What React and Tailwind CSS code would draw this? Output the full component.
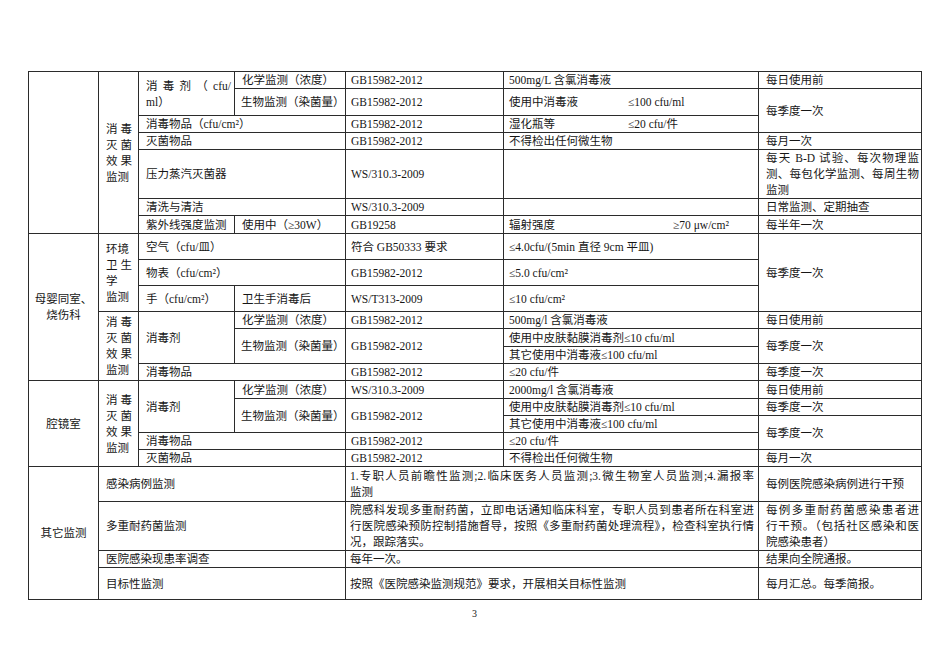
import React from 'react'

// ─── cell styles ─────────────────────────────────────────────────────────────
const B = 'border border-[#2b2b2b] align-middle p-0 leading-[16px]'
const T = `${B} text-left pl-[7px] pr-[3px] whitespace-nowrap`   // item / sub-item
const S = `${B} text-left pl-[5px] pr-[3px] whitespace-nowrap`   // standard / result
const F = `${B} text-left pl-[7px] pr-[2px] whitespace-nowrap`   // frequency
const V = `${B} text-left px-[7px]`                              // narrow vertical label
const D = `${B} text-center`                                     // department
const W = `${B} text-left px-[4px]`                              // wide merged text

// justified lines, last line left-aligned
function J({ lines }) {
  return lines.map((l, i) => (
    <div
      key={i}
      className={i < lines.length - 1 ? 'whitespace-nowrap text-justify [text-align-last:justify]' : 'whitespace-nowrap'}
    >
      {l}
    </div>
  ))
}

function Vert({ lines }) {
  return (
    <div className="w-[26px]">
      <J lines={lines} />
    </div>
  )
}

const GB = 'GB15982-2012'

function Pair({ a, b, w }) {
  return (
    <span className="flex">
      <span className={w}>{a}</span>
      <span>{b}</span>
    </span>
  )
}

export default function App() {
  return (
    <div className="w-[950px] min-h-[672px] bg-white text-[#161616] text-[11.5px] font-['Liberation_Serif','Noto_Sans_CJK_SC',serif] pt-[71px] pl-[28px]">
      <table className="table-fixed border-collapse w-[893px]">
        <colgroup>
          <col className="w-[70px]" />
          <col className="w-[40px]" />
          <col className="w-[96px]" />
          <col className="w-[111px]" />
          <col className="w-[158px]" />
          <col className="w-[255px]" />
          <col className="w-[163px]" />
        </colgroup>
        <tbody>
          {/* ── section 1 ── */}
          <tr className="h-[16px]">
            <td rowSpan={7} className={D}></td>
            <td rowSpan={7} className={V}><Vert lines={['消毒', '灭菌', '效果', '监测']} /></td>
            <td rowSpan={2} className={`${B} text-left pl-[7px] pr-[3px]`}><J lines={['消毒剂（cfu/', 'ml）']} /></td>
            <td className={T}>化学监测（浓度）</td>
            <td className={S}>{GB}</td>
            <td className={S}>500mg/L 含氯消毒液</td>
            <td className={F}>每日使用前</td>
          </tr>
          <tr className="h-[27px]">
            <td className={`${S} pl-[6px]`}>生物监测（染菌量）</td>
            <td className={S}>{GB}</td>
            <td className={S}><Pair a="使用中消毒液" b="≤100 cfu/ml" w="w-[119px]" /></td>
            <td rowSpan={2} className={F}>每季度一次</td>
          </tr>
          <tr className="h-[17px]">
            <td colSpan={2} className={T}>消毒物品（cfu/cm²）</td>
            <td className={S}>{GB}</td>
            <td className={S}><Pair a="湿化瓶等" b="≤20 cfu/件" w="w-[119px]" /></td>
          </tr>
          <tr className="h-[17px]">
            <td colSpan={2} className={T}>灭菌物品</td>
            <td className={S}>{GB}</td>
            <td className={S}>不得检出任何微生物</td>
            <td className={F}>每月一次</td>
          </tr>
          <tr className="h-[49px]">
            <td colSpan={2} className={T}>压力蒸汽灭菌器</td>
            <td className={S}>WS/310.3-2009</td>
            <td className={S}></td>
            <td className={F}><J lines={['每天 B-D 试验、每次物理监', '测、每包化学监测、每周生物', '监测']} /></td>
          </tr>
          <tr className="h-[17px]">
            <td colSpan={2} className={T}>清洗与清洁</td>
            <td className={S}>WS/310.3-2009</td>
            <td className={S}></td>
            <td className={F}>日常监测、定期抽查</td>
          </tr>
          <tr className="h-[18px]">
            <td className={T}>紫外线强度监测</td>
            <td className={T}>使用中（≥30W）</td>
            <td className={S}>GB19258</td>
            <td className={S}><Pair a="辐射强度" b="≥70 μw/cm²" w="w-[164px]" /></td>
            <td className={F}>每半年一次</td>
          </tr>

          {/* ── section 2 ── */}
          <tr className="h-[26px]">
            <td rowSpan={7} className={D}>母婴同室、<br />烧伤科</td>
            <td rowSpan={3} className={V}>
              <div className="w-[26px]">
                <div>环境</div>
                <J lines={['卫生', '学']} />
                <div>监测</div>
              </div>
            </td>
            <td colSpan={2} className={T}>空气（cfu/皿）</td>
            <td className={S}>符合 GB50333 要求</td>
            <td className={S}>≤4.0cfu/(5min 直径 9cm 平皿)</td>
            <td rowSpan={3} className={F}>每季度一次</td>
          </tr>
          <tr className="h-[26px]">
            <td colSpan={2} className={T}>物表（cfu/cm²）</td>
            <td className={S}>{GB}</td>
            <td className={S}>≤5.0 cfu/cm²</td>
          </tr>
          <tr className="h-[26px]">
            <td className={T}>手（cfu/cm²）</td>
            <td className={T}>卫生手消毒后</td>
            <td className={S}>WS/T313-2009</td>
            <td className={S}>≤10 cfu/cm²</td>
          </tr>
          <tr className="h-[17px]">
            <td rowSpan={4} className={V}><Vert lines={['消毒', '灭菌', '效果', '监测']} /></td>
            <td rowSpan={3} className={T}>消毒剂</td>
            <td className={T}>化学监测（浓度）</td>
            <td className={S}>{GB}</td>
            <td className={S}>500mg/l 含氯消毒液</td>
            <td className={F}>每日使用前</td>
          </tr>
          <tr className="h-[18px]">
            <td rowSpan={2} className={`${S} pl-[6px]`}>生物监测（染菌量）</td>
            <td rowSpan={2} className={S}>{GB}</td>
            <td className={S}>使用中皮肤黏膜消毒剂≤10 cfu/ml</td>
            <td rowSpan={2} className={F}>每季度一次</td>
          </tr>
          <tr className="h-[17px]">
            <td className={S}>其它使用中消毒液≤100 cfu/ml</td>
          </tr>
          <tr className="h-[16px]">
            <td colSpan={2} className={T}>消毒物品</td>
            <td className={S}>{GB}</td>
            <td className={S}>≤20 cfu/件</td>
            <td className={F}>每季度一次</td>
          </tr>

          {/* ── section 3 ── */}
          <tr className="h-[18px]">
            <td rowSpan={5} className={D}>腔镜室</td>
            <td rowSpan={5} className={V}><Vert lines={['消毒', '灭菌', '效果', '监测']} /></td>
            <td rowSpan={3} className={T}>消毒剂</td>
            <td className={T}>化学监测（浓度）</td>
            <td className={S}>WS/310.3-2009</td>
            <td className={S}>2000mg/l 含氯消毒液</td>
            <td className={F}>每日使用前</td>
          </tr>
          <tr className="h-[16px]">
            <td rowSpan={2} className={`${S} pl-[6px]`}>生物监测（染菌量）</td>
            <td rowSpan={2} className={S}>{GB}</td>
            <td className={S}>使用中皮肤黏膜消毒剂≤10 cfu/ml</td>
            <td className={F}>每季度一次</td>
          </tr>
          <tr className="h-[17px]">
            <td className={S}>其它使用中消毒液≤100 cfu/ml</td>
            <td rowSpan={2} className={F}>每季度一次</td>
          </tr>
          <tr className="h-[17px]">
            <td colSpan={2} className={T}>消毒物品</td>
            <td className={S}>{GB}</td>
            <td className={S}>≤20 cfu/件</td>
          </tr>
          <tr className="h-[17px]">
            <td colSpan={2} className={T}>灭菌物品</td>
            <td className={S}>{GB}</td>
            <td className={S}>不得检出任何微生物</td>
            <td className={F}>每月一次</td>
          </tr>

          {/* ── section 4 ── */}
          <tr className="h-[35px]">
            <td rowSpan={4} className={D}>其它监测</td>
            <td colSpan={3} className={T}>感染病例监测</td>
            <td colSpan={2} className={W}>
              <J lines={['1.专职人员前瞻性监测;2.临床医务人员监测;3.微生物室人员监测;4.漏报率', '监测']} />
            </td>
            <td className={F}>每例医院感染病例进行干预</td>
          </tr>
          <tr className="h-[47px]">
            <td colSpan={3} className={T}>多重耐药菌监测</td>
            <td colSpan={2} className={`${W} leading-[15.5px]`}>
              <J
                lines={[
                  '院感科发现多重耐药菌，立即电话通知临床科室，专职人员到患者所在科室进',
                  '行医院感染预防控制措施督导，按照《多重耐药菌处理流程》，检查科室执行情',
                  '况，跟踪落实。',
                ]}
              />
            </td>
            <td className={`${F} leading-[15.5px]`}><J lines={['每例多重耐药菌感染患者进', '行干预。（包括社区感染和医', '院感染患者）']} /></td>
          </tr>
          <tr className="h-[17px]">
            <td colSpan={3} className={T}>医院感染现患率调查</td>
            <td colSpan={2} className={W}>每年一次。</td>
            <td className={F}>结果向全院通报。</td>
          </tr>
          <tr className="h-[32px]">
            <td colSpan={3} className={T}>目标性监测</td>
            <td colSpan={2} className={W}>按照《医院感染监测规范》要求，开展相关目标性监测</td>
            <td className={F}>每月汇总。每季简报。</td>
          </tr>
        </tbody>
      </table>

      <div className="w-[893px] text-center text-[10px] leading-[14px] mt-[7px]">3</div>
    </div>
  )
}
